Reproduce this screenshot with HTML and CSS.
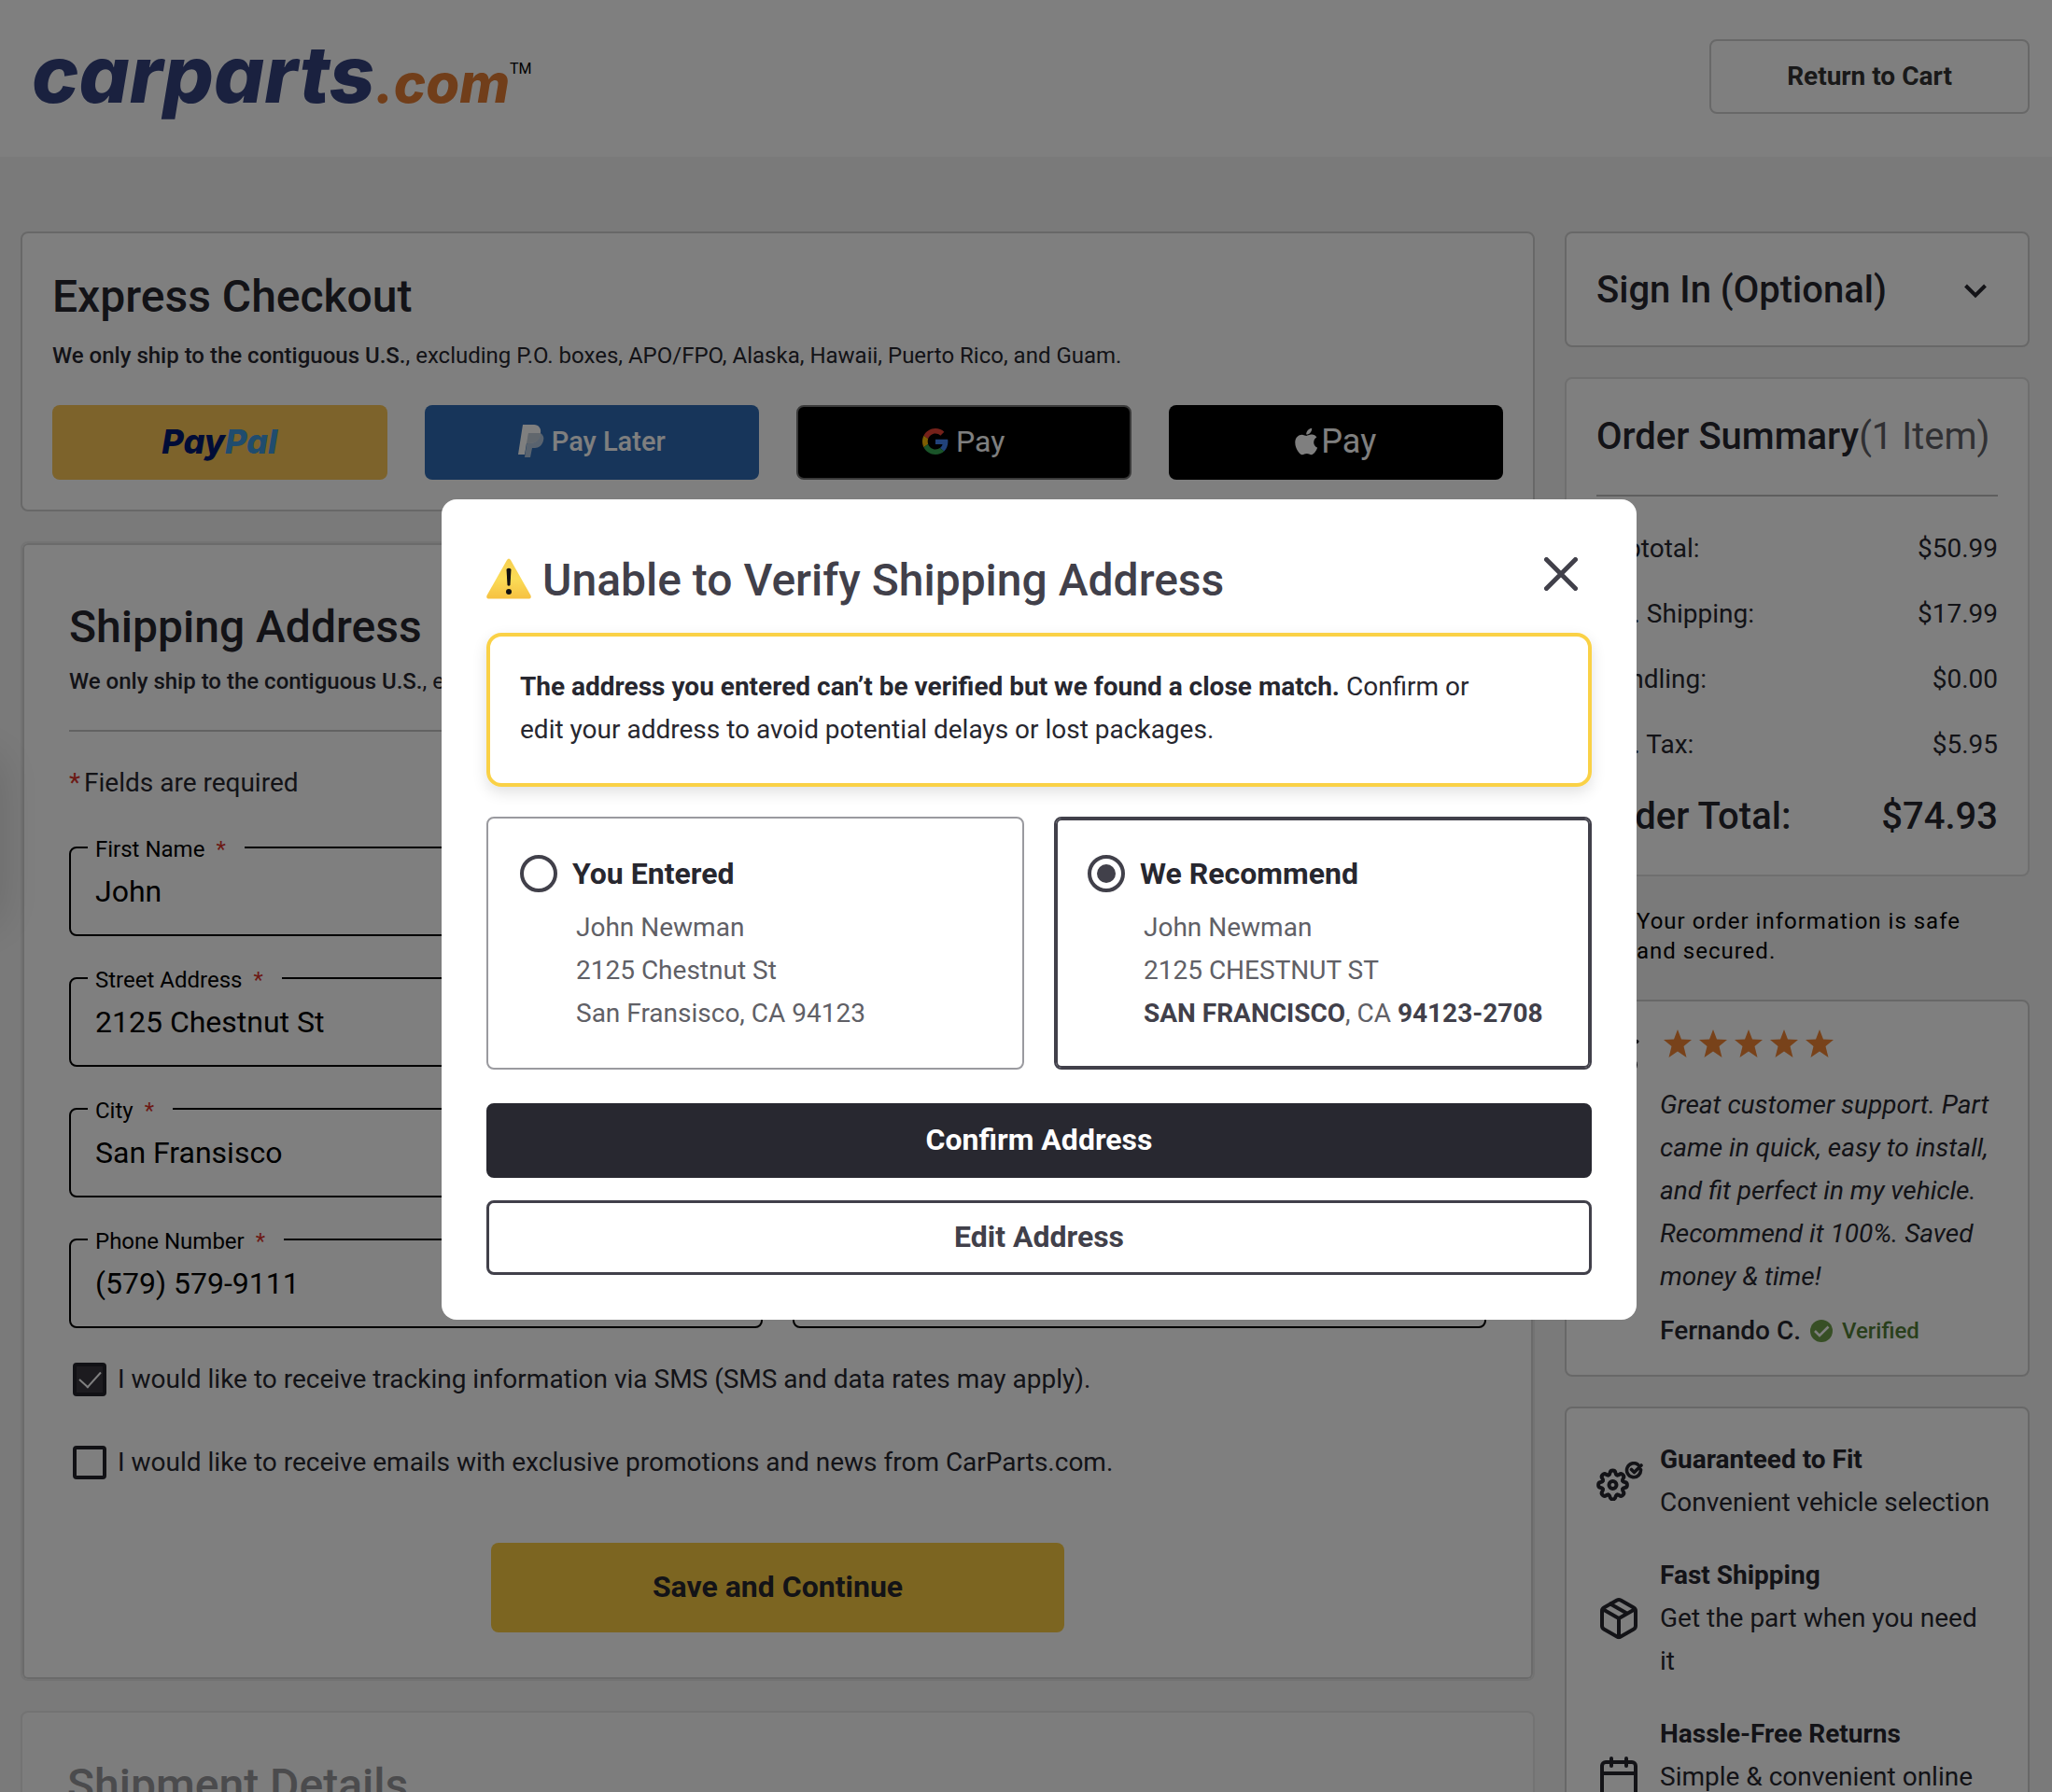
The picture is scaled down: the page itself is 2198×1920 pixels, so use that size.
FILE: index.html
```html
<!DOCTYPE html>
<html lang="en">
<head>
<meta charset="utf-8">
<meta name="viewport" content="width=device-width, initial-scale=1">
<title>Checkout - CarParts.com</title>
<link rel="stylesheet" href="styles.css">
</head>
<body class="modal-open">
<header class="site-header">
  <a class="logo" href="#"><span class="logo-name">carparts</span><span class="logo-tld">.com</span><span class="logo-tm">TM</span></a>
  <a class="return-link" href="#">Return to Cart</a>
</header>

<main class="checkout">
  <div class="main-column">
    <section class="card express">
      <h2 class="title">Express Checkout</h2>
      <p class="ship-note"><strong>We only ship to the contiguous U.S.</strong>, excluding P.O. boxes, APO/FPO, Alaska, Hawaii, Puerto Rico, and Guam.</p>
      <div class="pay-buttons">
        <button class="pay paypal" type="button"><span class="pp-dark">Pay</span><span class="pp-light">Pal</span></button>
        <button class="pay pay-later" type="button">
          <svg width="28" height="36" viewBox="0 0 28 36" aria-hidden="true">
            <path d="M5 0h12c5 0 8 4 7 9-1 7-5 11-12 11H9L7 32H0z" fill="#fff"/>
            <path d="M11 9h13c3 2 4 5 3 8-1 5-5 8-9 8h-3l-2 10H7z" fill="#dfe6ee" opacity=".75"/>
            <path d="M11 9h13c0 7-5 11-12 11H9z" fill="#c3cedb"/>
          </svg>
          <span>Pay Later</span>
        </button>
        <button class="pay google-pay" type="button">
          <svg width="28" height="28" viewBox="0 0 48 48" aria-hidden="true">
            <path fill="#EA4335" d="M24 9.500c3.540 0 6.710 1.220 9.210 3.600l6.850-6.850C35.900 2.380 30.470 0 24 0 14.620 0 6.510 5.380 2.560 13.220l7.980 6.190C12.430 13.720 17.740 9.500 24 9.500z"/>
            <path fill="#4285F4" d="M46.980 24.550c0-1.570-.15-3.090-.38-4.550H24v9.020h12.940c-.58 2.960-2.260 5.480-4.780 7.180l7.730 6c4.510-4.180 7.090-10.360 7.090-17.650z"/>
            <path fill="#FBBC05" d="M10.530 28.590c-.48-1.450-.76-2.990-.76-4.590s.27-3.140.76-4.590l-7.980-6.190C.92 16.460 0 20.120 0 24c0 3.880.92 7.540 2.560 10.780l7.970-6.190z"/>
            <path fill="#34A853" d="M24 48c6.480 0 11.930-2.130 15.890-5.810l-7.730-6c-2.150 1.450-4.920 2.300-8.160 2.300-6.260 0-11.570-4.220-13.470-9.910l-7.980 6.190C6.510 42.620 14.620 48 24 48z"/>
          </svg>
          <span>Pay</span>
        </button>
        <button class="pay apple-pay" type="button">
          <svg width="24" height="30" viewBox="0 28 378 456" aria-hidden="true">
            <path fill="#fff" d="M318.700 268.700c-.2-36.700 16.400-64.400 50-84.800-18.800-26.900-47.200-41.700-84.700-44.600-35.500-2.800-74.300 20.700-88.500 20.700-15 0-49.400-19.700-76.400-19.700C63.300 141.200 4 184.800 4 273.500q0 39.300 14.400 81.200c12.800 36.700 59 126.700 107.200 125.200 25.200-.6 43-17.900 75.800-17.900 31.800 0 48.300 17.900 76.400 17.900 48.600-.7 90.400-82.500 102.600-119.300-65.200-30.700-61.700-90-61.700-91.900zm-56.600-164.200c27.300-32.400 24.800-61.900 24-72.500-24.100 1.400-52 16.400-67.900 34.900-17.500 19.800-27.800 44.300-25.600 71.900 26.100 2 49.900-11.400 69.500-34.300z"/>
          </svg>
          <span>Pay</span>
        </button>
      </div>
    </section>

    <section class="card shipping">
      <h2 class="title">Shipping Address</h2>
      <p class="ship-note"><strong>We only ship to the contiguous U.S.</strong>, excluding P.O. boxes, APO/FPO, Alaska, Hawaii, Puerto Rico, and Guam.</p>
      <p class="required-note"><span class="star">*</span>Fields are required</p>
      <form class="address-form">
        <div class="fields">
          <fieldset class="field"><legend><label for="first">First Name</label><span class="star">*</span></legend><input id="first" type="text" value="John"></fieldset>
          <fieldset class="field"><legend><label for="last">Last Name</label><span class="star">*</span></legend><input id="last" type="text"></fieldset>
          <fieldset class="field"><legend><label for="street">Street Address</label><span class="star">*</span></legend><input id="street" type="text" value="2125 Chestnut St"></fieldset>
          <fieldset class="field"><legend><label for="zip">Zip Code</label><span class="star">*</span></legend><input id="zip" type="text"></fieldset>
          <fieldset class="field"><legend><label for="city">City</label><span class="star">*</span></legend><input id="city" type="text" value="San Fransisco"></fieldset>
          <fieldset class="field"><legend><label for="state">State</label><span class="star">*</span></legend><input id="state" type="text"></fieldset>
          <fieldset class="field"><legend><label for="phone">Phone Number</label><span class="star">*</span></legend><input id="phone" type="tel" value="(579) 579-9111"></fieldset>
          <fieldset class="field"><legend><label for="email">Email</label><span class="star">*</span></legend><input id="email" type="email"></fieldset>
        </div>
        <div class="consents">
          <label class="consent"><input type="checkbox" checked><span>I would like to receive tracking information via SMS (SMS and data rates may apply).</span></label>
          <label class="consent"><input type="checkbox"><span>I would like to receive emails with exclusive promotions and news from CarParts.com.</span></label>
        </div>
        <button class="save" type="submit">Save and Continue</button>
      </form>
    </section>

    <section class="card shipment">
      <h2 class="title">Shipment Details</h2>
    </section>
  </div>

  <aside class="side-column">
    <button class="card sign-in" type="button">
      <span>Sign In (Optional)</span>
      <svg width="48" height="48" viewBox="0 0 48 48" fill="none" stroke="currentColor" stroke-width="4" aria-hidden="true"><path d="M13.500 19l10.500 10.500L34.500 19"/></svg>
    </button>

    <section class="card summary">
      <h2 class="side-title">Order Summary<span class="count">(1 Item)</span></h2>
      <dl class="totals">
        <div class="line"><dt>Subtotal:</dt><dd>$50.99</dd></div>
        <div class="line"><dt>Est. Shipping:</dt><dd>$17.99</dd></div>
        <div class="line"><dt>Handling:</dt><dd>$0.00</dd></div>
        <div class="line"><dt>Est. Tax:</dt><dd>$5.95</dd></div>
        <div class="line grand"><dt>Order Total:</dt><dd>$74.93</dd></div>
      </dl>
    </section>

    <p class="secure">Your order information is safe and secured.</p>

    <section class="card review">
      <svg class="icon" width="48" height="48" viewBox="0 0 24 24" fill="none" stroke="currentColor" stroke-width="2" stroke-linejoin="round" aria-hidden="true"><path d="M12 2l9.800 4.500L12 11 2.200 6.500zM5 9v9c4 4 9 4 12 1"/><circle cx="18" cy="19" r="3"/></svg>
      <div>
        <div class="stars" role="img" aria-label="5 out of 5 stars">
          <svg viewBox="0 0 30 30"><path d="M15 0l4 10.500 11 .5-8.500 7 3 12L15 23.500 5.500 30l3-12L0 11l11-.5z"/></svg>
          <svg viewBox="0 0 30 30"><path d="M15 0l4 10.500 11 .5-8.500 7 3 12L15 23.500 5.500 30l3-12L0 11l11-.5z"/></svg>
          <svg viewBox="0 0 30 30"><path d="M15 0l4 10.500 11 .5-8.500 7 3 12L15 23.500 5.500 30l3-12L0 11l11-.5z"/></svg>
          <svg viewBox="0 0 30 30"><path d="M15 0l4 10.500 11 .5-8.500 7 3 12L15 23.500 5.500 30l3-12L0 11l11-.5z"/></svg>
          <svg viewBox="0 0 30 30"><path d="M15 0l4 10.500 11 .5-8.500 7 3 12L15 23.500 5.500 30l3-12L0 11l11-.5z"/></svg>
        </div>
        <blockquote>Great customer support. Part came in quick, easy to install, and fit perfect in my vehicle. Recommend it 100%. Saved money &amp; time!</blockquote>
        <p class="reviewer"><span>Fernando C.</span>
          <svg width="24" height="24" viewBox="0 0 24 24" aria-hidden="true"><circle cx="12" cy="12" r="12" fill="#6f9f4a"/><path d="M5 12l5 5 9.500-9.500" fill="none" stroke="#fff" stroke-width="2.500"/></svg>
          <span class="verified">Verified</span></p>
      </div>
    </section>

    <section class="card features">
      <div class="feature">
        <svg class="icon" width="50" height="42" viewBox="0 0 50 42" fill="none" stroke="currentColor" stroke-width="4" stroke-linecap="round" stroke-linejoin="round" aria-hidden="true">
          <defs><path id="tooth" d="M10.700-4.400Q11.300-3.200 12.800-3Q15.400-2.600 15.400 0Q15.400 2.600 12.800 3Q11.300 3.200 10.700 4.400"/></defs>
          <g transform="translate(17.500 25)">
            <use href="#tooth"/><use href="#tooth" transform="rotate(45)"/><use href="#tooth" transform="rotate(90)"/><use href="#tooth" transform="rotate(135)"/><use href="#tooth" transform="rotate(180)"/><use href="#tooth" transform="rotate(225)"/><use href="#tooth" transform="rotate(270)"/><use href="#tooth" transform="rotate(315)"/>
            <circle r="4"/>
          </g>
          <path d="M44.500 3.200A7.500 7.500 0 1 0 47.500 8.500M37.500 8.500l3 3 7.500-7.500" stroke-width="3.600"/>
        </svg>
        <p><strong>Guaranteed to Fit</strong><br>Convenient vehicle selection</p>
      </div>
      <div class="feature">
        <svg class="icon" width="48" height="48" viewBox="0 0 24 24" fill="none" stroke="currentColor" stroke-width="2" stroke-linecap="round" stroke-linejoin="round" aria-hidden="true"><path d="M16.500 9.400l-9-5.190M21 16V8a2 2 0 0 0-1-1.730l-7-4a2 2 0 0 0-2 0l-7 4A2 2 0 0 0 3 8v8a2 2 0 0 0 1 1.730l7 4a2 2 0 0 0 2 0l7-4A2 2 0 0 0 21 16zM3.270 6.960L12 12.010l8.730-5.050M12 22.080V12"/></svg>
        <p><strong>Fast Shipping</strong><br>Get the part when you need it</p>
      </div>
      <div class="feature">
        <svg class="icon" width="48" height="48" viewBox="0 0 24 24" fill="none" stroke="currentColor" stroke-width="2" stroke-linecap="round" stroke-linejoin="round" aria-hidden="true"><rect x="3" y="4" width="18" height="18" rx="2"/><path d="M16 2v4M8 2v4M3 10h18"/></svg>
        <p><strong>Hassle-Free Returns</strong><br>Simple &amp; convenient online returns</p>
      </div>
    </section>
  </aside>
</main>

<div class="overlay">
  <div class="modal" role="dialog" aria-modal="true" aria-labelledby="modal-title">
    <div class="modal-head">
      <svg class="warning" width="48" height="44" viewBox="0 0 48 44" aria-hidden="true">
        <defs><linearGradient id="warn" x1="0" y1="0" x2="0" y2="1"><stop offset="0" stop-color="#f6cf50"/><stop offset=".5" stop-color="#fbdc57"/><stop offset="1" stop-color="#f6c141"/></linearGradient></defs>
        <path d="M22 2Q24-1 26 2L47.500 40Q48.500 43.500 45 43.500H3Q-.5 43.500.5 40z" fill="url(#warn)"/>
        <path d="M21.500 12Q24 9.500 26.500 12L25.500 29Q24 30.500 22.500 29z" fill="#111"/><circle cx="24" cy="36" r="3" fill="#111"/>
      </svg>
      <h2 class="modal-title" id="modal-title">Unable to Verify Shipping Address</h2>
      <button class="close" type="button" aria-label="Close">
        <svg width="36" height="36" viewBox="0 0 36 36" fill="none" stroke="currentColor" stroke-width="5" stroke-linecap="round" aria-hidden="true"><path d="M2.500 2.500l31 31M33.500 2.500l-31 31"/></svg>
      </button>
    </div>
    <div class="alert"><p><strong>The address you entered can’t be verified but we found a close match.</strong> Confirm or edit your address to avoid potential delays or lost packages.</p></div>
    <div class="choices">
      <label class="choice">
        <span class="choice-title"><input type="radio" name="address"><span>You Entered</span></span>
        <span class="choice-address">John Newman<br>2125 Chestnut St<br>San Fransisco, CA 94123</span>
      </label>
      <label class="choice selected">
        <span class="choice-title"><input type="radio" name="address" checked><span>We Recommend</span></span>
        <span class="choice-address">John Newman<br>2125 CHESTNUT ST<br><strong>SAN FRANCISCO</strong>, CA <strong>94123-2708</strong></span>
      </label>
    </div>
    <button class="modal-button primary" type="button">Confirm Address</button>
    <button class="modal-button" type="button">Edit Address</button>
  </div>
</div>
<div class="drawer-edge"></div>
</body>
</html>
```
FILE: styles.css
```css
* { box-sizing: border-box; }

body {
  margin: 0;
  background: #f4f4f4;
  color: #27272f;
  font-family: Roboto, "Liberation Sans", sans-serif;
  font-size: 28px;
  line-height: 46px;
}

.modal-open { height: 100vh; overflow: hidden; }

h2, p, dl, dd, blockquote { margin: 0; }
button, input { font: inherit; color: inherit; }
button { cursor: pointer; padding: 0; }
svg { display: block; flex: none; }
strong { font-weight: 700; }

/* Header */
.site-header {
  display: flex;
  justify-content: space-between;
  align-items: flex-start;
  padding: 42px 24px 46px 34px;
  background: #fff;
}
.logo {
  display: flex;
  align-items: baseline;
  color: #35437f;
  font: italic 800 85px/76px Inter, sans-serif;
  text-decoration: none;
}
.logo-tld { color: #e37d34; font-size: 58px; line-height: 56px; }
.logo-tm { align-self: flex-start; padding-top: 24px; color: #000; font: 400 16px/16px Roboto, sans-serif; }
.return-link {
  width: 343px;
  border: 2px solid #d0d0d0;
  border-radius: 8px;
  color: #333;
  font-weight: 700;
  line-height: 76px;
  text-align: center;
  text-decoration: none;
}

/* Page columns */
.checkout {
  display: grid;
  grid-template-columns: minmax(0, 1fr) 498px;
  gap: 32px;
  padding: 80px 24px 0 22px;
}
.main-column { display: flex; flex-direction: column; gap: 32px; }
.side-column { display: flex; flex-direction: column; gap: 32px; }
.card { background: #fff; border: 2px solid #d0d0d0; border-radius: 8px; }
.title { font-size: 48px; font-weight: 500; line-height: 68px; }
.ship-note { font-size: 24px; line-height: 36px; }
.ship-note strong { font-weight: 500; }

/* Express checkout */
.express { padding: 34px 32px 32px; }
.express .ship-note { margin: 11px 0 35px; }
.pay-buttons { display: grid; grid-template-columns: repeat(4, 1fr); gap: 40px; }
.pay {
  display: flex;
  align-items: center;
  justify-content: center;
  height: 80px;
  padding-bottom: 2px;
  border: 0;
  border-radius: 8px;
  color: #fff;
}
.paypal { background: #fbc656; font: italic 800 36px/44px Inter, sans-serif; }
.pp-dark { color: #00186e; }
.pp-light { color: #4098dc; }
.pay-later { gap: 8px; background: #2e6bb4; font-size: 29px; font-weight: 500; }
.google-pay { gap: 8px; background: #000; border: 2px solid #757575; font-size: 32px; }
.apple-pay { gap: 4px; background: #000; font-size: 36px; }

/* Shipping form */
.shipping { padding: 56px 50px 50px; border-color: #e6e6e6; box-shadow: inset 0 0 0 2px #d6d6d6; }
.shipping .ship-note { padding: 6px 0 34px; border-bottom: 2px solid #c4c4c4; }
.required-note { padding: 35px 0 33px; line-height: 40px; }
.star { color: #d9342b; }
.required-note .star { margin-right: 4px; }
.address-form { display: flex; flex-direction: column; }
.fields { display: grid; grid-template-columns: 1fr 1fr; gap: 29px 32px; }
.field { min-width: 0; margin: 0; padding: 0; border: 2px solid #000; border-radius: 8px; color: #000; }
.field legend { margin-left: 18px; padding: 4px 20px 0 8px; font-size: 24px; line-height: 28px; }
.field .star { margin-left: 12px; }
.field input {
  display: block;
  width: 100%;
  height: 77px;
  padding: 0 26px 15px;
  border: 0;
  background: none;
  font-size: 32px;
}
.consents { display: flex; flex-direction: column; gap: 53px; padding: 37px 4px 68px; }
.consent { display: flex; align-items: center; gap: 12px; line-height: 36px; }
.consent input {
  display: grid;
  place-items: center;
  width: 36px;
  height: 36px;
  margin: 0;
  border: 4px solid #23232b;
  border-radius: 4px;
  appearance: none;
}
.consent input:checked { background: #38363f; }
.consent input:checked::before {
  content: "";
  width: 11px;
  height: 20px;
  margin-bottom: 6px;
  border: solid #fff;
  border-width: 0 2px 2px 0;
  transform: rotate(42deg);
}
.save {
  align-self: center;
  width: 614px;
  height: 96px;
  padding-bottom: 2px;
  border: 0;
  border-radius: 8px;
  background: #f9cb43;
  font-size: 32px;
  font-weight: 700;
}
.shipment { padding: 44px 48px; background: #fafafa; border-color: #e6e6e6; color: #97979b; }

/* Sidebar */
.sign-in, .side-title, .grand { font-size: 40px; font-weight: 500; line-height: 60px; }
.sign-in { display: flex; align-items: center; justify-content: space-between; padding: 31px 32px 29px; }
.sign-in svg { margin: 6px 0; }
.summary { padding: 32px; border-color: #dedede; }
.side-title { padding-bottom: 32px; border-bottom: 2px solid #bdbdbd; white-space: nowrap; }
.count { color: #606066; font-weight: 400; }
.totals { display: flex; flex-direction: column; gap: 24px; padding-top: 33px; }
.line { display: flex; justify-content: space-between; }
.secure { padding: 0 60px 4px 77px; color: #000; font-size: 24px; line-height: 32px; letter-spacing: 1px; }
.review, .feature { display: grid; grid-template-columns: 48px minmax(0, 1fr); gap: 20px; }
.review { padding: 30px 32px 24px; }
.stars { display: flex; gap: 8px; padding: 0 4px 28px; }
.stars svg { width: 30px; height: 30px; fill: #f08535; }
blockquote { font-style: italic; }
.reviewer { display: flex; align-items: center; gap: 10px; padding-top: 12px; font-weight: 500; }
.verified { color: #527f37; font-size: 24px; }
.features { display: flex; flex-direction: column; gap: 32px; padding: 32px; }
.feature { align-items: center; }

/* Modal */
.overlay {
  position: fixed;
  inset: 0;
  display: flex;
  align-items: center;
  justify-content: center;
  padding: 28px 0 0 28px;
  background: rgba(0, 0, 0, .5);
}
.modal { width: 1280px; padding: 48px; border-radius: 16px; background: #fff; }
.modal-head { display: flex; align-items: flex-start; gap: 12px; padding: 11px 15px 28px 0; color: #41404a; }
.warning { margin-top: 4px; }
.modal-title { flex: 1; font-size: 48px; font-weight: 500; line-height: 56px; }
.close { margin-top: 3px; border: 0; background: none; color: inherit; }
.alert {
  padding: 31px 32px 34px;
  border: 4px solid #fad146;
  border-radius: 16px;
  box-shadow: 0 6px 16px rgba(0, 0, 0, .12);
}
.alert p { max-width: 1040px; }
.choices { display: grid; grid-template-columns: 1fr 1fr; gap: 32px; padding: 32px 0 36px; }
.choice { padding: 39px 34px 35px; border: 2px solid #9a9a9f; border-radius: 8px; }
.selected { border-color: #41404a; box-shadow: inset 0 0 0 2px #41404a; }
.choice-title { display: flex; align-items: center; gap: 16px; font-size: 32px; font-weight: 700; line-height: 40px; }
.choice-title input {
  display: grid;
  place-items: center;
  width: 40px;
  height: 40px;
  margin: 0;
  border: 4px solid #41404a;
  border-radius: 50%;
  appearance: none;
}
.choice-title input:checked::before { content: ""; width: 20px; height: 20px; border-radius: 50%; background: #41404a; }
.choice-address { display: block; padding: 15px 0 0 60px; color: #606066; }
.choice-address strong { color: #41404a; }
.modal-button {
  display: block;
  width: 100%;
  height: 80px;
  padding-bottom: 2px;
  border: 3px solid #41404a;
  border-radius: 8px;
  background: #fff;
  color: #41404a;
  font-size: 32px;
  font-weight: 700;
}
.modal-button + .modal-button { margin-top: 24px; }
.primary { border-color: #282830; background: #282830; color: #fff; }

/* Shadow of the closed drawer at the window's left edge */
.drawer-edge {
  position: fixed;
  top: 810px;
  left: -60px;
  width: 60px;
  height: 180px;
  box-shadow: 0 0 50px rgba(0, 0, 0, .14);
}
```
